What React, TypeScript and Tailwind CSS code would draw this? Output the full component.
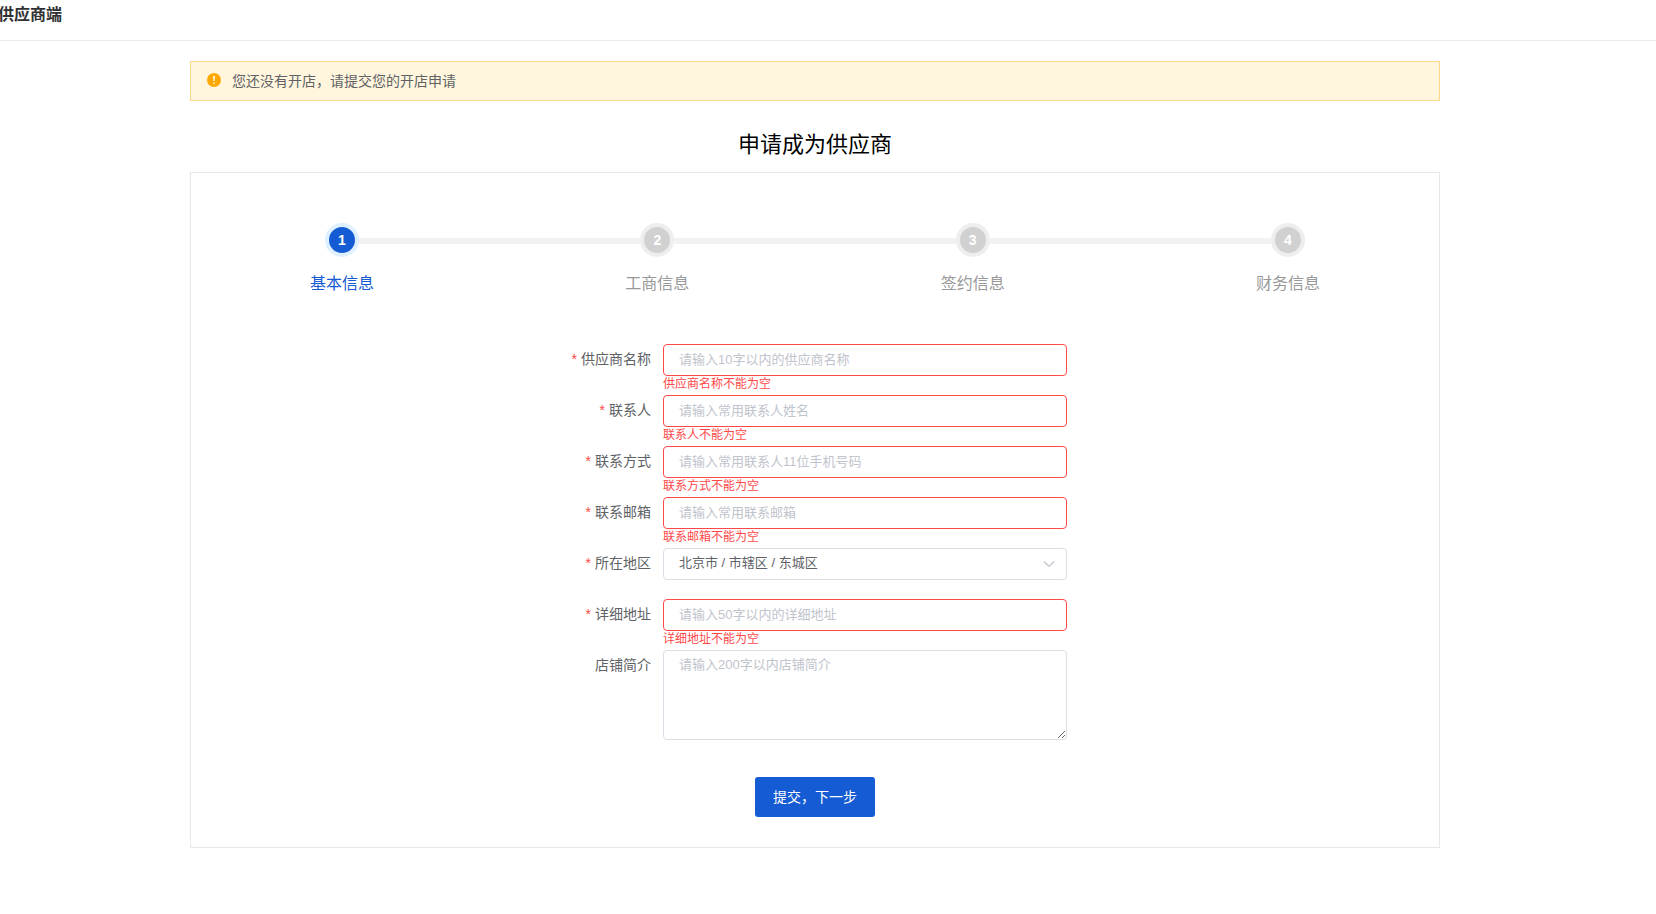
import { Fragment } from 'react';

const STEPS = ['基本信息', '工商信息', '签约信息', '财务信息'];
const CURRENT_STEP = 0;

interface TextField {
  id: string;
  label: string;
  placeholder: string;
  type?: string;
}

const CONTACT_FIELDS: TextField[] = [
  { id: 'name', label: '供应商名称', placeholder: '请输入10字以内的供应商名称' },
  { id: 'contact', label: '联系人', placeholder: '请输入常用联系人姓名' },
  { id: 'phone', label: '联系方式', placeholder: '请输入常用联系人11位手机号码', type: 'tel' },
  { id: 'email', label: '联系邮箱', placeholder: '请输入常用联系邮箱', type: 'email' },
];

const ADDRESS_FIELD: TextField = {
  id: 'address',
  label: '详细地址',
  placeholder: '请输入50字以内的详细地址',
};

function StepBar() {
  return (
    <ol className="flex items-start px-[119px]">
      {STEPS.map((step, i) => {
        const active = i === CURRENT_STEP;
        return (
          <Fragment key={step}>
            {i > 0 && (
              <li aria-hidden="true" className="-mx-[15px] mt-[15px] h-1.5 flex-1 bg-[#f2f2f2]" />
            )}
            <li
              aria-current={active ? 'step' : undefined}
              className={`flex w-16 flex-col items-center ${active ? 'text-[#155bd4]' : 'text-[#999999]'}`}
            >
              <span
                className={`flex size-[34px] items-center justify-center rounded-full border-4 text-sm font-bold text-white ${
                  active ? 'border-[#dff0ff] bg-[#155bd4]' : 'border-[#eeeeee] bg-[#d1d1d1]'
                }`}
              >
                {i + 1}
              </span>
              <span className="mt-[15px] text-base whitespace-nowrap">{step}</span>
            </li>
          </Fragment>
        );
      })}
    </ol>
  );
}

function FieldLabel({ htmlFor, text, required }: { htmlFor: string; text: string; required?: boolean }) {
  return (
    <label htmlFor={htmlFor} className="h-8 w-[100px] shrink-0 pr-3 text-right text-sm leading-[30px] text-[#606266]">
      {required && <span className="mr-1 text-[#ff4949]">*</span>}
      {text}
    </label>
  );
}

function FormInput({ field }: { field: TextField }) {
  return (
    <div className="flex">
      <FieldLabel htmlFor={field.id} text={field.label} required />
      <div className="flex-1">
        <input
          id={field.id}
          type={field.type ?? 'text'}
          placeholder={field.placeholder}
          aria-invalid="true"
          aria-describedby={`${field.id}-error`}
          className="block h-8 w-full rounded border border-[#ff4949] bg-white px-[15px] pb-0.5 text-[13px] text-[#606266] outline-none placeholder:text-[#c0c4cc]"
        />
        <p id={`${field.id}-error`} className="h-[19px] text-xs leading-4 text-[#ff4949]">
          {field.label}不能为空
        </p>
      </div>
    </div>
  );
}

export default function App() {
  return (
    <div className="min-h-screen bg-white font-['Liberation_Sans','Noto_Sans_CJK_SC',sans-serif]">
      <header className="h-[41px] border-b border-[#ebebeb]">
        <h1 className="-ml-0.5 pt-[3px] text-base font-semibold text-[#303133]">供应商端</h1>
      </header>

      <main className="pt-5 pr-[26px]">
        <div className="mx-auto max-w-[1250px]">
          <div role="alert" className="flex h-10 items-center border border-[#fed88a] bg-[#fff6dd] px-4">
            <svg viewBox="0 0 14 14" className="mb-0.5 size-3.5" aria-hidden="true">
              <circle cx="7" cy="7" r="7" fill="#ffa800" />
              <path d="M6 3h2l-.4 5H6.4z" fill="#fff6dd" />
              <circle cx="7" cy="10.1" r=".9" fill="#fff6dd" />
            </svg>
            <span className="ml-[11px] text-sm text-[#606266]">您还没有开店，请提交您的开店申请</span>
          </div>

          <h2 className="mt-[26px] mb-[9px] text-center text-[22px] leading-9 text-black">申请成为供应商</h2>

          <section className="border border-[#e8e8e8] pt-[50px] pb-[30px]">
            <StepBar />

            <form noValidate className="mx-auto mt-12 w-[504px] max-w-full" onSubmit={(e) => e.preventDefault()}>
              {CONTACT_FIELDS.map((field) => (
                <FormInput key={field.id} field={field} />
              ))}

              <div className="mb-[19px] flex">
                <FieldLabel htmlFor="region" text="所在地区" required />
                <div className="relative flex-1">
                  <select
                    id="region"
                    className="block h-8 w-full appearance-none rounded border border-[#dcdfe6] bg-white px-[15px] pb-0.5 text-[13px] text-[#606266] outline-none"
                  >
                    <option>北京市 / 市辖区 / 东城区</option>
                  </select>
                  <svg
                    viewBox="0 0 12 12"
                    className="pointer-events-none absolute top-2.5 right-3 size-3"
                    fill="none"
                    stroke="#c0c4cc"
                    strokeWidth="1.2"
                    aria-hidden="true"
                  >
                    <path d="M1 3.5l5 5 5-5" />
                  </svg>
                </div>
              </div>

              <FormInput field={ADDRESS_FIELD} />

              <div className="flex">
                <FieldLabel htmlFor="intro" text="店铺简介" />
                <textarea
                  id="intro"
                  placeholder="请输入200字以内店铺简介"
                  className="block h-[90px] flex-1 resize-y rounded border border-[#dcdfe6] bg-white px-[15px] py-1 text-[13px] leading-5 text-[#606266] outline-none placeholder:text-[#c0c4cc]"
                />
              </div>

              <button
                type="submit"
                className="mx-auto mt-[37px] block h-10 w-[120px] rounded-[3px] bg-[#155bd4] text-sm text-white"
              >
                提交，下一步
              </button>
            </form>
          </section>
        </div>
      </main>
    </div>
  );
}
